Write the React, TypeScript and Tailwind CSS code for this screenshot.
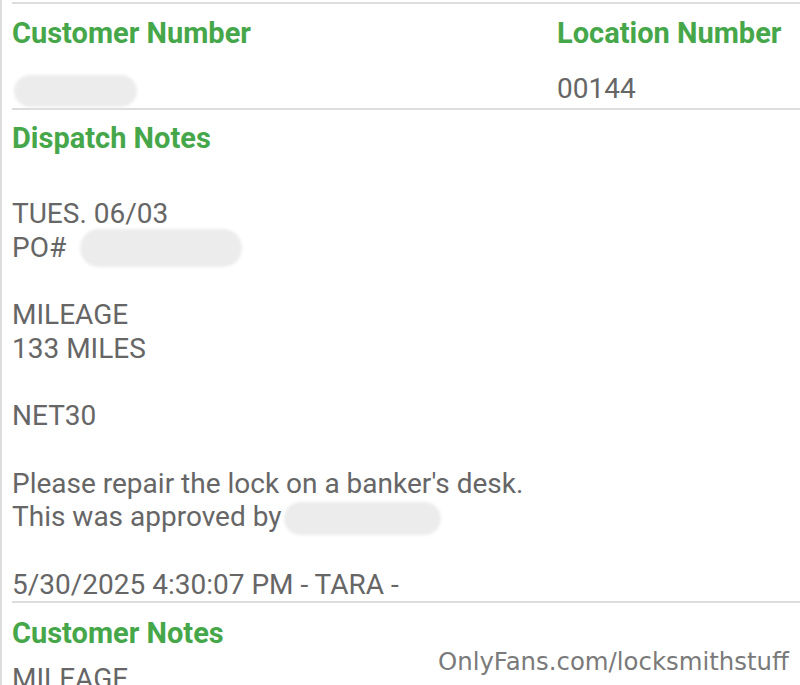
const GREEN = "text-[#46a74a]";

function Heading({ children }: { children: React.ReactNode }) {
  return (
    <div className={`${GREEN} text-[29px] font-bold leading-[34px]`}>
      {children}
    </div>
  );
}

// soft smudge used where a value has been hidden
function Redacted({ w, h }: { w: number; h: number }) {
  return (
    <span
      className="inline-block align-middle rounded-full bg-[#ececec] blur-[1.5px]"
      style={{ width: w, height: h }}
    />
  );
}

export default function App() {
  return (
    <div
      className="relative w-[800px] h-[685px] overflow-hidden bg-white border-l-2 border-[#dcdcdc] text-[#666666]"
      style={{ fontFamily: "Roboto, 'Liberation Sans', sans-serif" }}
    >
      <div className="pl-[10px] pt-[2px]">
        {/* customer / location header */}
        <div className="border-t-2 border-[#dddddd] pt-[12px] pb-[2px] border-b-2">
          <div className="flex">
            <div className="flex-1">
              <Heading>Customer Number</Heading>
            </div>
            <div className="w-[243px]">
              <Heading>Location Number</Heading>
            </div>
          </div>
          <div className="flex mt-[22px] text-[28px] leading-[34px] h-[34px]">
            <div className="flex-1 pl-[2px]">
              <Redacted w={123} h={32} />
            </div>
            <div className="w-[243px]">00144</div>
          </div>
        </div>

        {/* dispatch notes */}
        <div className="pt-[11px] border-b-2 border-[#dddddd]">
          <Heading>Dispatch Notes</Heading>
          <div className="mt-[42px] text-[28px] leading-[33.7px]">
            <div>TUES. 06/03</div>
            <div className="flex items-center h-[33.7px]">
              <span>PO#</span>
              <span className="ml-[14px] -my-[4px]">
                <Redacted w={162} h={38} />
              </span>
            </div>
            <div>&nbsp;</div>
            <div>MILEAGE</div>
            <div>133 MILES</div>
            <div>&nbsp;</div>
            <div>NET30</div>
            <div>&nbsp;</div>
            <div>Please repair the lock on a banker's desk.</div>
            <div className="flex items-center h-[33.7px]">
              <span>This was approved by</span>
              <span className="ml-[3px]">
                <Redacted w={157} h={33} />
              </span>
            </div>
            <div>&nbsp;</div>
            <div>5/30/2025 4:30:07 PM - TARA -</div>
          </div>
        </div>

        {/* customer notes */}
        <div className="pt-[13px]">
          <Heading>Customer Notes</Heading>
          <div className="mt-[12px] text-[28px] leading-[34px]">MILEAGE</div>
        </div>
      </div>

      <div
        className="absolute left-[436px] top-[645px] text-[24.4px] leading-[34px] text-[#7a7a7a]"
        style={{ fontFamily: "'DejaVu Sans', sans-serif" }}
      >
        OnlyFans.com/locksmithstuff
      </div>
    </div>
  );
}
